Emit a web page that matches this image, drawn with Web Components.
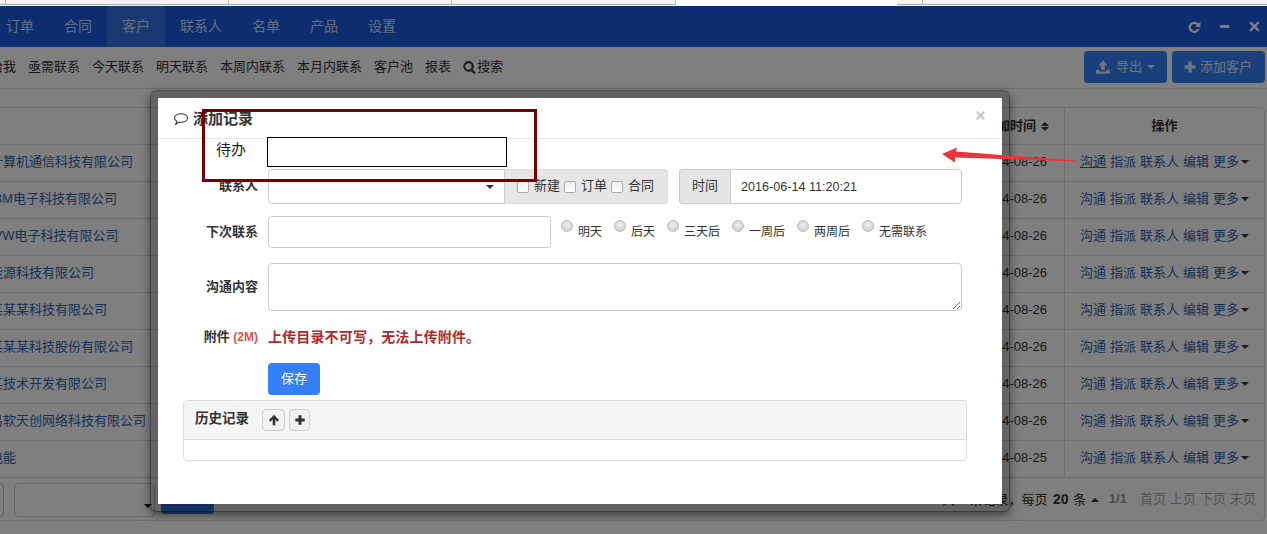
<!DOCTYPE html>
<html lang="zh">
<head>
<meta charset="utf-8">
<title>添加记录</title>
<style>
  html, body { margin: 0; height: 534px; overflow: hidden; background: #fff; }
  body {
    position: relative;
    display: flex;
    flex-direction: column;
    font: 13px/1.4 "Liberation Sans", "Noto Sans CJK SC", sans-serif;
    color: #333;
  }
</style>
</head>
<body>
<crm-tabstrip></crm-tabstrip>
<crm-nav></crm-nav>
<crm-toolbar></crm-toolbar>
<crm-table></crm-table>
<crm-overlay>
  <crm-modal heading="添加记录">
    <crm-record-form></crm-record-form>
  </crm-modal>
</crm-overlay>
<crm-callout label="待办"></crm-callout>
<crm-arrow></crm-arrow>

<script>
const ICONS = {
  refresh: `<path d="M11.5 3.6A5.6 5.6 0 1 0 12.6 9h-2.3a3.4 3.4 0 1 1-.4-3.8L8 7h5.4V1.7z" fill="currentColor"/>`,
  minus: `<path d="M2 5.5h10v3H2z" fill="currentColor"/>`,
  close: `<path d="M3.2 1.4 7 5.2l3.8-3.8 1.8 1.8L8.8 7l3.8 3.8-1.8 1.8L7 8.8l-3.8 3.8-1.8-1.8L5.2 7 1.4 3.2z" fill="currentColor"/>`,
  plus: `<path d="M5.3 1.5h3.4v3.8h3.8v3.4H8.7v3.8H5.3V8.7H1.5V5.3h3.8z" fill="currentColor"/>`,
  up: `<path d="M7 1 12.8 7l-1.9 1.9L8.5 6.4V13h-3V6.4L3.1 8.9 1.2 7z" fill="currentColor"/>`,
  upload: `<path d="M7 1 11 5.6H8.6V9.4H5.4V5.6H3zM1 9.4h3v1.5h6V9.4h3V13H1z" fill="currentColor"/>`,
  search: `<path fill-rule="evenodd" d="M6 1a5 5 0 0 1 4 8l3 3-1.4 1.4-3-3A5 5 0 1 1 6 1zm0 2a3 3 0 1 0 0 6 3 3 0 0 0 0-6z" fill="currentColor"/>`,
  chat: `<path d="M7.5 2.5c3.4 0 6 1.7 6 4s-2.6 4-6 4c-.6 0-1.2 0-1.7-.2L2.6 12.3l.9-2.8C2.2 8.700 1.500 7.700 1.500 6.500c0-2.300 2.600-4 6-4z" fill="none" stroke="currentColor" stroke-width="1"/>`
};
const icon = (name, size = 14) => `<svg width="${size}" height="${size}" viewBox="0 0 14 14" style="display:block;flex:none">${ICONS[name]}</svg>`;
const caret = (dir = "down") => `<span style="display:inline-block;width:0;height:0;border-left:4px solid transparent;border-right:4px solid transparent;border-${dir === "down" ? "top" : "bottom"}:4px solid currentColor;vertical-align:middle"></span>`;

class CrmTabstrip extends HTMLElement {
  constructor() {
    super();
    this.attachShadow({ mode: "open" });
    this.shadowRoot.innerHTML = `
      <style>
        :host { display: flex; height: 6px; flex: none; background: #f4f2f2; }
        div { box-sizing: border-box; height: 5px; border-bottom: 1px solid #aab0a8; border-right: 1px solid #bbb; }
        .open { background: #fff; border: 0; height: 6px; }
      </style>
      <div style="width:6px"></div><div style="width:223px"></div><div style="width:223px"></div><div style="width:224px"></div>
      <div class="open" style="width:221px"></div>
      <div style="width:26px"></div><div style="flex:1;border-right:0"></div>
    `;
  }
}

class CrmNav extends HTMLElement {
  constructor() {
    super();
    this.attachShadow({ mode: "open" });
    const tabs = ["订单", "合同", "客户", "联系人", "名单", "产品", "设置"];
    this.shadowRoot.innerHTML = `
      <style>
        :host { display: flex; flex: none; height: 41px; background: #185de0; color: rgba(255,255,255,.8); font-size: 14px; }
        .tabs { display: flex; margin-left: -9px; }
        a { display: flex; align-items: center; padding: 0 15px; }
        a.active { background: rgba(255,255,255,.12); }
        .win { display: flex; align-items: center; gap: 17px; margin-left: auto; padding-right: 6px; color: #fff; }
      </style>
      <div class="tabs">${tabs.map(t => `<a class="${t === "客户" ? "active" : ""}">${t}</a>`).join("")}</div>
      <div class="win">${icon("refresh", 14)}<span style="width:13px">${icon("minus", 13)}</span>${icon("close", 13)}</div>
    `;
  }
}

class CrmToolbar extends HTMLElement {
  constructor() {
    super();
    this.attachShadow({ mode: "open" });
    const links = ["指派给我", "亟需联系", "今天联系", "明天联系", "本周内联系", "本月内联系", "客户池", "报表"];
    this.shadowRoot.innerHTML = `
      <style>
        :host { display: flex; flex: none; box-sizing: border-box; height: 42px; align-items: center; border-bottom: 1px solid #ddd; color: #333; padding-right: 2px; }
        .links { display: flex; gap: 12px; margin-left: -36px; white-space: nowrap; }
        .search { display: flex; align-items: center; margin-left: -1px; }
        .btns { display: flex; gap: 5px; margin-left: auto; margin-top: -1px; }
        .btn { display: flex; align-items: center; box-sizing: border-box; height: 32px; padding: 0 12px 0 11px; gap: 5px; background: #3580f8; color: rgba(255,255,255,.85); border-radius: 4px; font-size: 13px; }
      </style>
      <div class="links">
        ${links.map(l => `<span>${l}</span>`).join("")}
        <span class="search">${icon("search", 15)}搜索</span>
      </div>
      <div class="btns">
        <span class="btn">${icon("upload", 16)}导出 ${caret()}</span>
        <span class="btn" style="padding:0 13px 0 11px;gap:3px">${icon("plus", 14)}添加客户</span>
      </div>
    `;
  }
}

class CrmTable extends HTMLElement {
  constructor() {
    super();
    this.attachShadow({ mode: "open" });
    const rows = [
      ["计算机通信科技有限公司", "2014-08-26"], ["IBM电子科技有限公司", "2014-08-26"], ["IVW电子科技有限公司", "2014-08-26"],
      ["能源科技有限公司", "2014-08-26"], ["某某某科技有限公司", "2014-08-26"], ["某某某科技股份有限公司", "2014-08-26"],
      ["某技术开发有限公司", "2014-08-26"], ["易软天创网络科技有限公司", "2014-08-26"], ["电能", "2014-08-25"]
    ];
    this.shadowRoot.innerHTML = `
      <style>
        :host { display: block; flex: none; box-sizing: border-box; height: 414px; margin: 18px 2px 0 -20px; border: 1px solid #ddd; border-radius: 4px; color: #333; }
        .row { display: flex; height: 37px; padding-bottom: 2px; border-top: 1px solid #ddd; box-sizing: border-box; align-items: stretch; }
        .row.head { height: 36px; padding-bottom: 0; border-top: 0; font-weight: bold; }
        .name { flex: 1; display: flex; align-items: center; padding-left: 9px; color: #2f62ad; white-space: nowrap; }
        .date { display: flex; align-items: center; justify-content: flex-end; gap: 5px; padding-right: 17px; }
        .head .date { padding-right: 15px; }
        .ops { box-sizing: border-box; width: 200px; margin-bottom: -2px; padding-bottom: 2px; display: flex; align-items: center; gap: 4px; padding-left: 15px; border-left: 1px solid #ddd; color: #2f62ad; white-space: nowrap; }
        .head .ops { justify-content: center; padding: 0; margin: 0; color: #333; }
        .sort { display: flex; flex-direction: column; gap: 1px; }
        .first { text-decoration: underline; }
        .more span { color: #333; margin-left: 1px; }
        .pager { display: flex; align-items: center; height: 44px; border-top: 1px solid #ddd; box-sizing: border-box; padding: 0 8px 0 0; white-space: nowrap; }
        .box { box-sizing: border-box; height: 34px; border: 1px solid #ccc; border-radius: 4px; position: relative; }
        .go { width: 53px; height: 31px; background: #3580f8; border-radius: 4px; margin: -3px 0 0 6px; }
        .info { margin-left: auto; display: flex; align-items: center; gap: 10px; }
        .info b { font-weight: bold; }
        .count b { margin: 0 1px 0 2px; font-size: 14px; }
        .count .tri { margin-left: 1px; }
        .dim { color: #999; }
        .links { display: flex; gap: 4px; color: #aaa; margin-left: 3px; }
      </style>
      <div class="row head">
        <div class="name"></div>
        <div class="date">添加时间<span class="sort">${caret("up")}${caret()}</span></div>
        <div class="ops">操作</div>
      </div>
      ${rows.map((r, i) => `
        <div class="row">
          <div class="name">${r[0]}</div>
          <div class="date">${r[1]}</div>
          <div class="ops"><span class="${i ? "" : "first"}">沟通</span><span>指派</span><span>联系人</span><span>编辑</span><span class="more">更多<span>${caret()}</span></span></div>
        </div>`).join("")}
      <div class="pager">
        <div class="box" style="width:24px;margin-left:-1px"></div>
        <div class="box" style="width:141px;margin-left:10px;color:#000">
          <span style="position:absolute;right:2px;top:13px">${caret()}</span>
        </div>
        <div class="go"></div>
        <div class="info">
          <span class="count">共 9 条记录，每页 <b>20</b> 条 <span class="tri">${caret("up")}</span></span>
          <b class="dim">1/1</b>
          <span class="links"><span>首页</span><span>上页</span><span>下页</span><span>末页</span></span>
        </div>
      </div>
    `;
  }
}

class CrmOverlay extends HTMLElement {
  constructor() {
    super();
    this.attachShadow({ mode: "open" });
    this.shadowRoot.innerHTML = `
      <style>
        :host { position: absolute; inset: 6px 0 0 0; background: rgba(0,0,0,.5); }
      </style>
      <slot></slot>
    `;
  }
}

class CrmModal extends HTMLElement {
  constructor() {
    super();
    this.attachShadow({ mode: "open" });
    this.shadowRoot.innerHTML = `
      <style>
        :host {
          position: absolute; left: 150px; top: 84px; width: 860px; height: 422px; box-sizing: border-box;
          display: flex; flex-direction: column;
          background: #fff; background-clip: padding-box;
          border: 8px solid rgba(0,0,0,.22); border-radius: 6px;
          box-shadow: 0 3px 9px rgba(0,0,0,.5);
        }
        header { display: flex; align-items: center; box-sizing: border-box; height: 41px; border-bottom: 1px solid #e5e5e5; padding: 0 16px 0 15px; color: #333; }
        h3 { margin: 0 0 0 5px; font-size: 15px; font-weight: bold; }
        .x { margin-left: auto; margin-top: -5px; color: #c4c4c4; }
      </style>
      <header>${icon("chat", 15)}<h3></h3><span class="x">${icon("close", 11)}</span></header>
      <slot></slot>
    `;
  }
  connectedCallback() {
    this.shadowRoot.querySelector("h3").textContent = this.getAttribute("heading") || "";
  }
}

class CrmField extends HTMLElement {
  constructor() {
    super();
    this.attachShadow({ mode: "open" });
    this.shadowRoot.innerHTML = `
      <style>
        :host { display: grid; grid-template-columns: 100px 1fr; column-gap: 10px; align-items: center; }
        label { text-align: right; font-weight: bold; color: #333; white-space: nowrap; }
        .body { display: flex; align-items: center; min-width: 0; }
      </style>
      <label><slot name="label"></slot></label>
      <div class="body"><slot></slot></div>
    `;
  }
}

class CrmRecordForm extends HTMLElement {
  constructor() {
    super();
    this.attachShadow({ mode: "open" });
    const checks = ["新建", "订单", "合同"];
    const radios = ["明天", "后天", "三天后", "一周后", "两周后", "无需联系"];
    this.shadowRoot.innerHTML = `
      <style>
        :host { display: flex; flex-direction: column; padding-top: 30px; color: #333; }
        * { box-sizing: border-box; }
        crm-field { padding-right: 40px; }
        input[type=text], textarea {
          display: block; margin: 0; padding: 0 10px; border: 1px solid #ccc; border-radius: 4px;
          font: inherit; color: #333; background: #fff; outline: 0;
        }
        .select { display: flex; justify-content: flex-end; align-items: center; width: 237px; height: 35px; border: 1px solid #ccc; border-radius: 4px 0 0 4px; padding-right: 10px; color: #333; }
        .addon { display: flex; align-items: center; height: 35px; background: #e6e6e6; border: 1px solid #ddd; }
        .checks { width: 163px; padding-left: 12px; border-left: 0; border-radius: 0 4px 4px 0; gap: 4px; }
        .checks label { display: flex; align-items: center; gap: 5px; }
        input[type=checkbox] { appearance: none; margin: 0; width: 12px; height: 12px; border: 1px solid #aaa; border-radius: 2px; background: linear-gradient(#eee, #fff); flex: none; }
        .time { display: flex; margin-left: 11px; flex: 1; }
        .time .addon { width: 51px; justify-content: center; border-radius: 4px 0 0 4px; border-color: #ccc; border-right: 0; }
        .time input { flex: 1; height: 35px; border-radius: 0 4px 4px 0; min-width: 0; font-size: 12.600px; }
        .next { margin-top: 12px; }
        .next input { width: 283px; height: 32px; flex: none; }
        .radios { display: flex; gap: 12px; margin-left: 10px; font-size: 12px; }
        .radios label { display: flex; gap: 5px; white-space: nowrap; line-height: 18px; }
        input[type=radio] { appearance: none; margin: -3px 0 0; width: 12px; height: 12px; border: 1px solid #bbb; border-radius: 50%; background: radial-gradient(circle at 50% 40%, #eee, #c8c8c8); flex: none; }
        .content { margin-top: 15px; }
        textarea { width: 100%; height: 48px; resize: vertical; }
        .attach { margin-top: 15px; line-height: 22px; }
        .size { color: #d9534f; font-size: 12px; }
        .warn { color: #b02a2a; font-size: 14px; font-weight: bold; letter-spacing: .15px; }
        .save { margin: 15px 0 0 110px; width: 52px; height: 32px; border: 0; border-radius: 4px; background: #3580f8; color: #fff; font: inherit; padding: 0; }
        .history { margin: 5px 35px 0 25px; border: 1px solid #ddd; border-radius: 4px; height: 61px; }
        .history header { display: flex; align-items: center; height: 39px; background: #f5f5f5; border-bottom: 1px solid #ddd; padding-left: 11px; border-radius: 3px 3px 0 0; }
        .history b { font-size: 13.500px; margin-right: 13px; margin-top: -2px; }
        .mini { display: flex; align-items: center; justify-content: center; width: 23px; height: 22px; border: 1px solid #ccc; border-radius: 4px; background: #f2f2f2; margin-right: 4px; color: #333; }
      </style>
      <crm-field>
        <span slot="label">联系人</span>
        <div class="select">${caret()}</div>
        <div class="addon checks">${checks.map(c => `<label><input type="checkbox">${c}</label>`).join("")}</div>
        <div class="time"><div class="addon">时间</div><input type="text" value="2016-06-14 11:20:21"></div>
      </crm-field>
      <crm-field class="next">
        <span slot="label">下次联系</span>
        <input type="text">
        <div class="radios">${radios.map(r => `<label><input type="radio" name="next">${r}</label>`).join("")}</div>
      </crm-field>
      <crm-field class="content">
        <span slot="label">沟通内容</span>
        <textarea></textarea>
      </crm-field>
      <crm-field class="attach">
        <span slot="label">附件 <span class="size">(2M)</span></span>
        <span class="warn">上传目录不可写，无法上传附件。</span>
      </crm-field>
      <button class="save">保存</button>
      <section class="history">
        <header><b>历史记录</b><span class="mini">${icon("up", 12)}</span><span class="mini" style="width:21px">${icon("plus", 12)}</span></header>
      </section>
    `;
  }
}

class CrmCallout extends HTMLElement {
  constructor() {
    super();
    this.attachShadow({ mode: "open" });
    this.shadowRoot.innerHTML = `
      <style>
        :host {
          position: absolute; left: 202px; top: 109px; width: 335px; height: 73px; box-sizing: border-box;
          display: flex; align-items: flex-start; padding: 25px 0 0 11px;
          border: 3px solid #770000; color: #222;
        }
        span { width: 51px; font-size: 15px; line-height: 26px; }
        input { box-sizing: border-box; width: 240px; height: 30px; margin: 0; background: #fff; border: 1px solid #000; border-radius: 0; outline: 0; }
      </style>
      <span></span><input type="text">
    `;
  }
  connectedCallback() {
    this.shadowRoot.querySelector("span").textContent = this.getAttribute("label") || "";
  }
}

class CrmArrow extends HTMLElement {
  constructor() {
    super();
    this.attachShadow({ mode: "open" });
    this.shadowRoot.innerHTML = `
      <style>
        :host { position: absolute; left: 940px; top: 145px; width: 140px; height: 20px; }
        svg { display: block; }
      </style>
      <svg width="140" height="20" viewBox="940 145 140 20">
        <polygon points="942,154 957,147.500 956,151.500 1076,160.500 1076,161.500 955,157.500 955,162.500" fill="#e8353a"/>
      </svg>
    `;
  }
}

customElements.define("crm-tabstrip", CrmTabstrip);
customElements.define("crm-nav", CrmNav);
customElements.define("crm-toolbar", CrmToolbar);
customElements.define("crm-table", CrmTable);
customElements.define("crm-overlay", CrmOverlay);
customElements.define("crm-modal", CrmModal);
customElements.define("crm-field", CrmField);
customElements.define("crm-record-form", CrmRecordForm);
customElements.define("crm-callout", CrmCallout);
customElements.define("crm-arrow", CrmArrow);
</script>
</body>
</html>
